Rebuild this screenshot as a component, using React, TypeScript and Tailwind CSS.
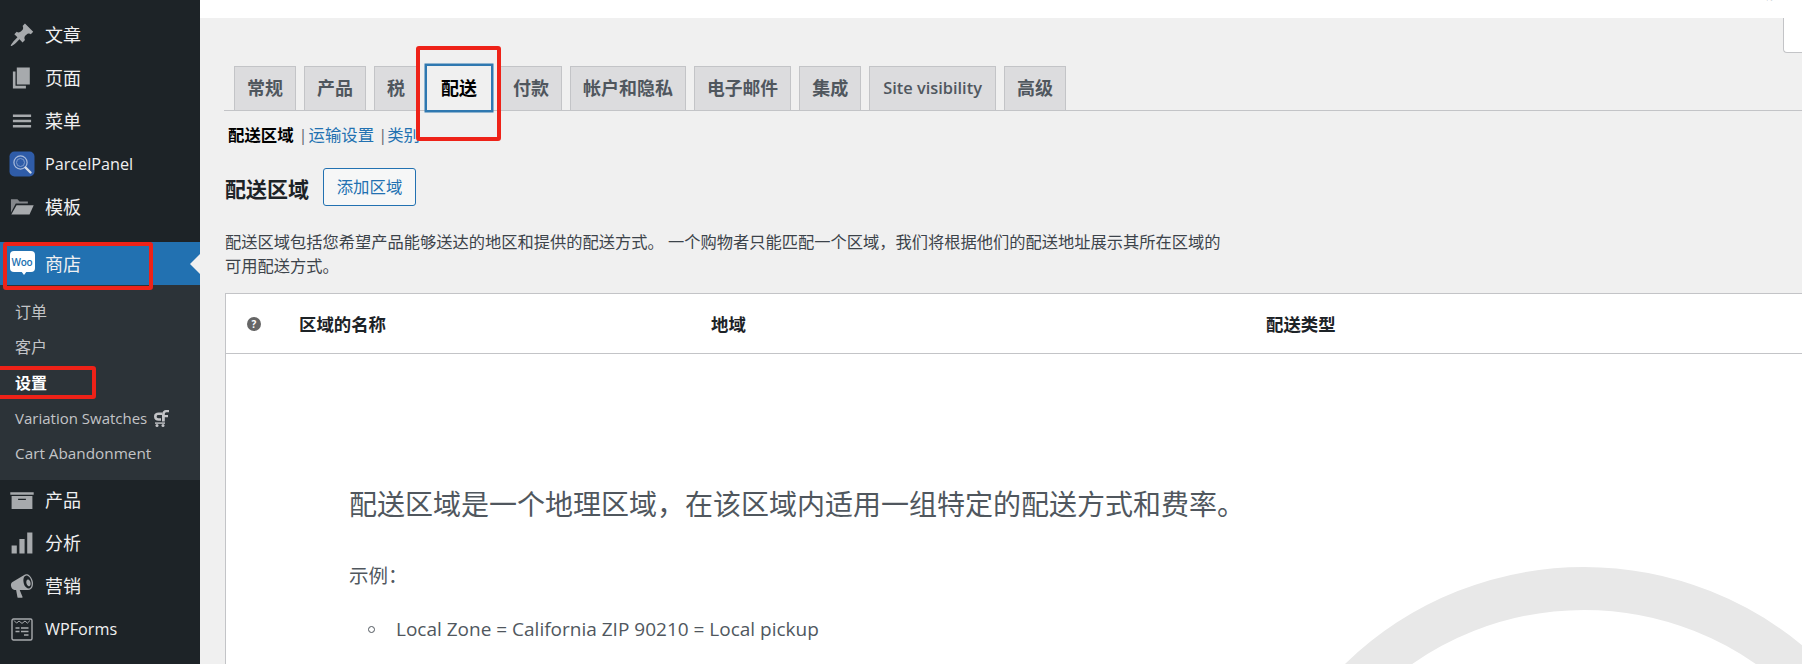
import React from 'react';

const ICON = 'w-[26px] h-[26px] fill-[#a7aaad]';

const PinIcon = () => (
  <svg viewBox="0 0 20 20" className={ICON}>
    <path d="M10.44 3.02l1.82-1.82 6.36 6.35-1.83 1.82c-1.05-.68-2.48-.57-3.41.36l-.75.75c-.92.93-1.04 2.35-.35 3.41l-1.83 1.82-2.41-2.41-2.8 2.79c-.42.42-3.38 2.71-3.8 2.29s1.86-3.39 2.28-3.81l2.79-2.79L4.1 9.36l1.83-1.82c1.05.69 2.48.57 3.4-.36l.75-.75c.93-.92 1.05-2.35.36-3.41z" />
  </svg>
);
const PageIcon = () => (
  <svg viewBox="0 0 20 20" className={ICON}>
    <path d="M6 15V2h10v13H6zm-1 1h8v2H3V5h2v11z" />
  </svg>
);
const MenuIcon = () => (
  <svg viewBox="0 0 20 20" className={ICON}>
    <path d="M17 7V5H3v2h14zm0 4V9H3v2h14zm0 4v-2H3v2h14z" />
  </svg>
);
const FolderIcon = () => (
  <svg viewBox="0 0 20 20" className={ICON}>
    <path fillOpacity="0.75" d="M1.5 14.5V4h5l1.6 1.7h6.4v1.6H5.2L1.5 14.5z" />
    <path d="M5.8 8.6h13.2l-3.2 7.2H1.8l4-7.2z" />
  </svg>
);
const ArchiveIcon = () => (
  <svg viewBox="0 0 20 20" className={ICON}>
    <path d="M19 4v2H1V4h18zM2 7h16v10H2V7zm11 3V9H7v1h6z" />
  </svg>
);
const ChartIcon = () => (
  <svg viewBox="0 0 20 20" className={ICON}>
    <path d="M18 18V2h-4v16h4zm-6 0V7H8v11h4zm-6 0v-6H2v6h4z" />
  </svg>
);
const MegaphoneIcon = () => (
  <svg viewBox="0 0 20 20" className={ICON}>
    <path d="M18.15 5.94c.46 1.62.38 3.22-.02 4.48-.42 1.28-1.26 2.18-2.3 2.48-.16.06-.26.06-.4.06-.06.02-.12.02-.18.02-.06.02-.14.02-.22.02h-6.8l2.22 5.5c.02.14-.06.26-.14.34-.08.1-.24.16-.34.16H6.95c-.1 0-.26-.06-.34-.16-.08-.08-.16-.2-.14-.34l-1-5.5H4.25l-.02-.02c-.5.06-1.08-.18-1.54-.62s-.88-1.08-1.06-1.88c-.24-.8-.2-1.56-.02-2.2.18-.62.58-1.08 1.06-1.3l.02-.02 9-5.4c.1-.06.18-.1.24-.16.06-.04.14-.08.24-.12.16-.08.28-.12.5-.18 1.04-.3 2.24.1 3.22 1s1.84 2.24 2.26 3.86zm-2.58 5.98h-.02c.4-.1.74-.34 1.04-.7.58-.7.86-1.76.86-3.04-.02-.64-.1-1.3-.28-1.98-.34-1.36-1.02-2.5-1.78-3.24s-1.68-1.1-2.46-.88c-.38.12-.72.34-1.02.7-.58.7-.84 1.76-.84 3.04.02.64.1 1.3.28 1.98.34 1.34 1 2.48 1.8 3.22.78.76 1.62 1.1 2.42.9zm-1.18-6.86c.26-.08.54-.02.82.16.28.18.54.44.78.78.24.36.42.76.54 1.26.12.48.16.94.1 1.36-.04.4-.18.74-.36 1.02-.2.3-.44.48-.7.56-.26.06-.54.02-.82-.16-.28-.18-.54-.44-.78-.78-.22-.34-.4-.76-.52-1.24-.12-.5-.18-.96-.14-1.36.04-.42.18-.76.38-1.04.2-.28.44-.48.7-.56z" />
  </svg>
);
const FormsIcon = () => (
  <svg viewBox="0 0 22 23" className="w-[22px] h-[23px] fill-none stroke-[#a7aaad]">
    <rect x="1" y="1" width="20" height="21" rx="1.5" strokeWidth="1.4" />
    <path d="M3 2.5l2.6 2.6L8 3l3 2.4L14 3l2.4 2.1L19 2.5" strokeWidth="1" />
    <path d="M4.5 10h4M10 10h7.5M4.5 13.5h4M10 13.5h7.5M13 17h4.5" strokeWidth="1.5" />
  </svg>
);
const ParcelIcon = () => (
  <svg viewBox="0 0 26 26" className="w-[26px] h-[26px]">
    <rect x="0.5" y="0.5" width="25" height="25" rx="5" fill="#2f5ca8" />
    <circle cx="11.5" cy="11.5" r="6.6" fill="none" stroke="#a9bbdb" strokeWidth="1.2" />
    <circle cx="11.5" cy="11.5" r="4" fill="none" stroke="#7f9ccc" strokeWidth="1" />
    <path d="M16.5 16.5l5 5" stroke="#d5dce8" strokeWidth="2.4" strokeLinecap="round" />
  </svg>
);
const WooIcon = () => (
  <span className="relative flex items-center justify-center w-[25px] h-[21px] rounded-[4px] bg-white mb-[4px]">
    <span className="text-[10px] leading-none font-semibold tracking-[-0.3px] text-[#2271b1]">Woo</span>
    <span className="absolute left-[11px] -bottom-[3px] w-0 h-0 border-t-[4px] border-t-white border-x-[3px] border-x-transparent" />
  </span>
);
const SwatchIcon = () => (
  <svg viewBox="0 0 15 17" className="w-[15px] h-[17px] ml-[7px] fill-[#c3c4c7]">
    <path d="M0 6.5C0 3.5 2 2.5 4.5 2.5H8V5H4.5C3 5 2.7 5.6 2.7 6.5S3 8.2 4.5 8.2H7v2.5H4.5C2 10.7 0 9.5 0 6.5z" />
    <path d="M8 11.5V4.5C8 1.5 10 0 12 0h3v2.3h-2.6c-1 0-1.6.7-1.6 2V5H14v2.2h-3.2v4.3H8z" />
    <rect x="1" y="12.4" width="10" height="1.4" />
    <circle cx="3" cy="15.5" r="1.5" />
    <circle cx="9" cy="15.5" r="1.5" />
  </svg>
);

const topItems = [
  { label: '文章', icon: <PinIcon /> },
  { label: '页面', icon: <PageIcon /> },
  { label: '菜单', icon: <MenuIcon /> },
  { label: 'ParcelPanel', icon: <ParcelIcon />, latin: true },
  { label: '模板', icon: <FolderIcon /> },
];

const bottomItems = [
  { label: '产品', icon: <ArchiveIcon /> },
  { label: '分析', icon: <ChartIcon /> },
  { label: '营销', icon: <MegaphoneIcon /> },
  { label: 'WPForms', icon: <FormsIcon />, latin: true },
];

const tabs = ['常规', '产品', '税', '配送', '付款', '帐户和隐私', '电子邮件', '集成', 'Site visibility', '高级'];

function MenuRow({ label, icon, latin }: { label: string; icon: React.ReactNode; latin?: boolean }) {
  return (
    <div className="flex items-center h-[43px] text-[#f0f0f1]">
      <span className="flex items-center justify-center w-[26px] ml-[9px] mr-[10px]">{icon}</span>
      <span className={latin ? 'pt-px text-[16.2px]' : 'pt-px text-[18px]'}>{label}</span>
    </div>
  );
}

function Sidebar() {
  return (
    <aside className="w-[200px] shrink-0 bg-[#1d2327] pt-[13.5px]">
      {topItems.map((item) => (
        <MenuRow key={item.label} {...item} />
      ))}
      <div className="relative mt-[13.5px] bg-[#2271b1]">
        <MenuRow label="商店" icon={<WooIcon />} />
        <span className="absolute right-0 top-[12px] w-0 h-0 border-y-[10px] border-y-transparent border-r-[10px] border-r-[#f0f0f0]" />
      </div>
      <div className="bg-[#2c3338] pt-[9px] pb-[8.5px] text-[#c3c4c7]">
        <div className="flex items-center h-[35.5px] pl-[15px] text-[16px]">订单</div>
        <div className="flex items-center h-[35.5px] pl-[15px] text-[16px]">客户</div>
        <div className="flex items-center h-[35.5px] pl-[15px] text-[16px] font-bold text-white">设置</div>
        <div className="flex items-center h-[35.5px] pl-[15px] text-[15px]">
          Variation Swatches
          <SwatchIcon />
        </div>
        <div className="flex items-center h-[35.5px] pl-[15px] text-[15.3px]">Cart Abandonment</div>
      </div>
      <div className="-mt-[1.5px]">
        {bottomItems.map((item) => (
          <MenuRow key={item.label} {...item} />
        ))}
      </div>
    </aside>
  );
}

function TabBar() {
  return (
    <div className="flex gap-[8px] pl-[10px] ml-[24px] h-[44px] border-b border-[#c3c4c7] box-content -mb-px">
      {tabs.map((tab) =>
        tab === '配送' ? (
          <div
            key={tab}
            className="flex items-center h-[44px] mx-[1px] px-[14px] text-[18px] font-semibold text-black bg-[#f0f0f0] shadow-[0_0_0_2.5px_#2f78b0]"
          >
            {tab}
          </div>
        ) : (
          <div
            key={tab}
            className={`flex items-center h-[44px] border border-b-0 border-[#c3c4c7] bg-[#dcdcde] font-semibold text-[#50575e] ${
              tab === 'Site visibility' ? 'px-[13px] text-[16.4px]' : tab === '电子邮件' ? 'px-[12px] text-[17.8px]' : 'px-[12px] text-[18px]'
            }`}
          >
            {tab}
          </div>
        ),
      )}
    </div>
  );
}

function ZonesPanel() {
  return (
    <div className="relative ml-[25px] mt-[15px] w-[1700px] h-[400px] overflow-hidden border border-[#c3c4c7] bg-white">
      <div className="flex items-center h-[60px] pt-px border-b border-[#c3c4c7] text-[17.4px] font-bold text-[#1d2327]">
        <div className="w-[73px] pl-[21px]">
          <span className="flex items-center justify-center w-[14px] h-[14px] rounded-full bg-[#666] text-white text-[10px] font-bold">?</span>
        </div>
        <div className="w-[412px]">区域的名称</div>
        <div className="w-[555px]">地域</div>
        <div>配送类型</div>
      </div>

      {/* watermark ring */}
      <svg viewBox="0 0 700 700" className="absolute left-[1008px] top-[266px] w-[700px] h-[700px] fill-none stroke-[#e8e8e8]">
        <circle cx="350" cy="350" r="321.5" strokeWidth="43" />
      </svg>

      <div className="relative pl-[123px] pt-[132px] text-[#50575e]">
        <h2 className="text-[28px] leading-[36px]">配送区域是一个地理区域，在该区域内适用一组特定的配送方式和费率。</h2>
        <p className="mt-[39px] text-[19.5px] leading-[30px]">示例：</p>
        <ul className="mt-[23px] ml-[19px]">
          <li className="flex items-center gap-[21px] text-[19px] leading-[30px]">
            <span className="w-[7px] h-[7px] rounded-full border border-[#50575e]" />
            Local Zone = California ZIP 90210 = Local pickup
          </li>
        </ul>
      </div>
    </div>
  );
}

export default function App() {
  return (
    <div className="relative flex w-[1802px] h-[664px] overflow-hidden bg-[#f0f0f0] font-['Open_Sans','Noto_Sans_CJK_SC',sans-serif]">
      <Sidebar />

      <main className="flex-1 min-w-0">
        <div className="relative h-[18px] bg-white overflow-hidden">
          <span className="absolute right-[11px] -top-[19px] text-[16px] leading-[24px] text-[#646970]">动态</span>
        </div>
        <div className="absolute right-0 top-[18px] w-[19px] h-[35px] bg-white border-l border-b border-[#c3c4c7] rounded-bl-[4px]" />

        <div className="pt-[48px]">
          <TabBar />
        </div>

        <div className="flex items-center ml-[28px] mt-[13px] h-[24px] text-[16.4px] text-[#2271b1]">
          <span className="font-bold text-black">配送区域</span>
          <span className="ml-[5px] mr-[1px] text-[#646970]">|</span>
          <span>运输设置</span>
          <span className="ml-[4px] text-[#646970]">|</span>
          <span>类别</span>
        </div>

        <div className="flex items-center ml-[25px] mt-[21px] h-[38px]">
          <h1 className="pt-[5px] text-[21px] font-bold text-[#1d2327]">配送区域</h1>
          <div className="flex items-center justify-center ml-[14px] w-[93px] h-[38px] rounded-[3px] border border-[#2271b1] bg-[#f6f7f7] text-[16.4px] text-[#2271b1]">
            添加区域
          </div>
        </div>

        <p className="ml-[25px] mt-[24px] w-[998px] text-[16.25px] leading-[24px] text-[#3c434a]">
          配送区域包括您希望产品能够送达的地区和提供的配送方式。 一个购物者只能匹配一个区域，我们将根据他们的配送地址展示其所在区域的可用配送方式。
        </p>

        <ZonesPanel />
      </main>

      {/* red annotation boxes drawn over the screenshot */}
      <div className="absolute left-[416px] top-[46px] w-[85px] h-[95px] rounded-[3px] border-[4px] border-[#ee2218]" />
      <div className="absolute left-[3px] top-[242px] w-[150px] h-[48px] rounded-[3px] border-[4px] border-[#ee2218]" />
      <div className="absolute -left-[6px] top-[366px] w-[102px] h-[33px] rounded-[3px] border-[4px] border-[#ee2218]" />
    </div>
  );
}
